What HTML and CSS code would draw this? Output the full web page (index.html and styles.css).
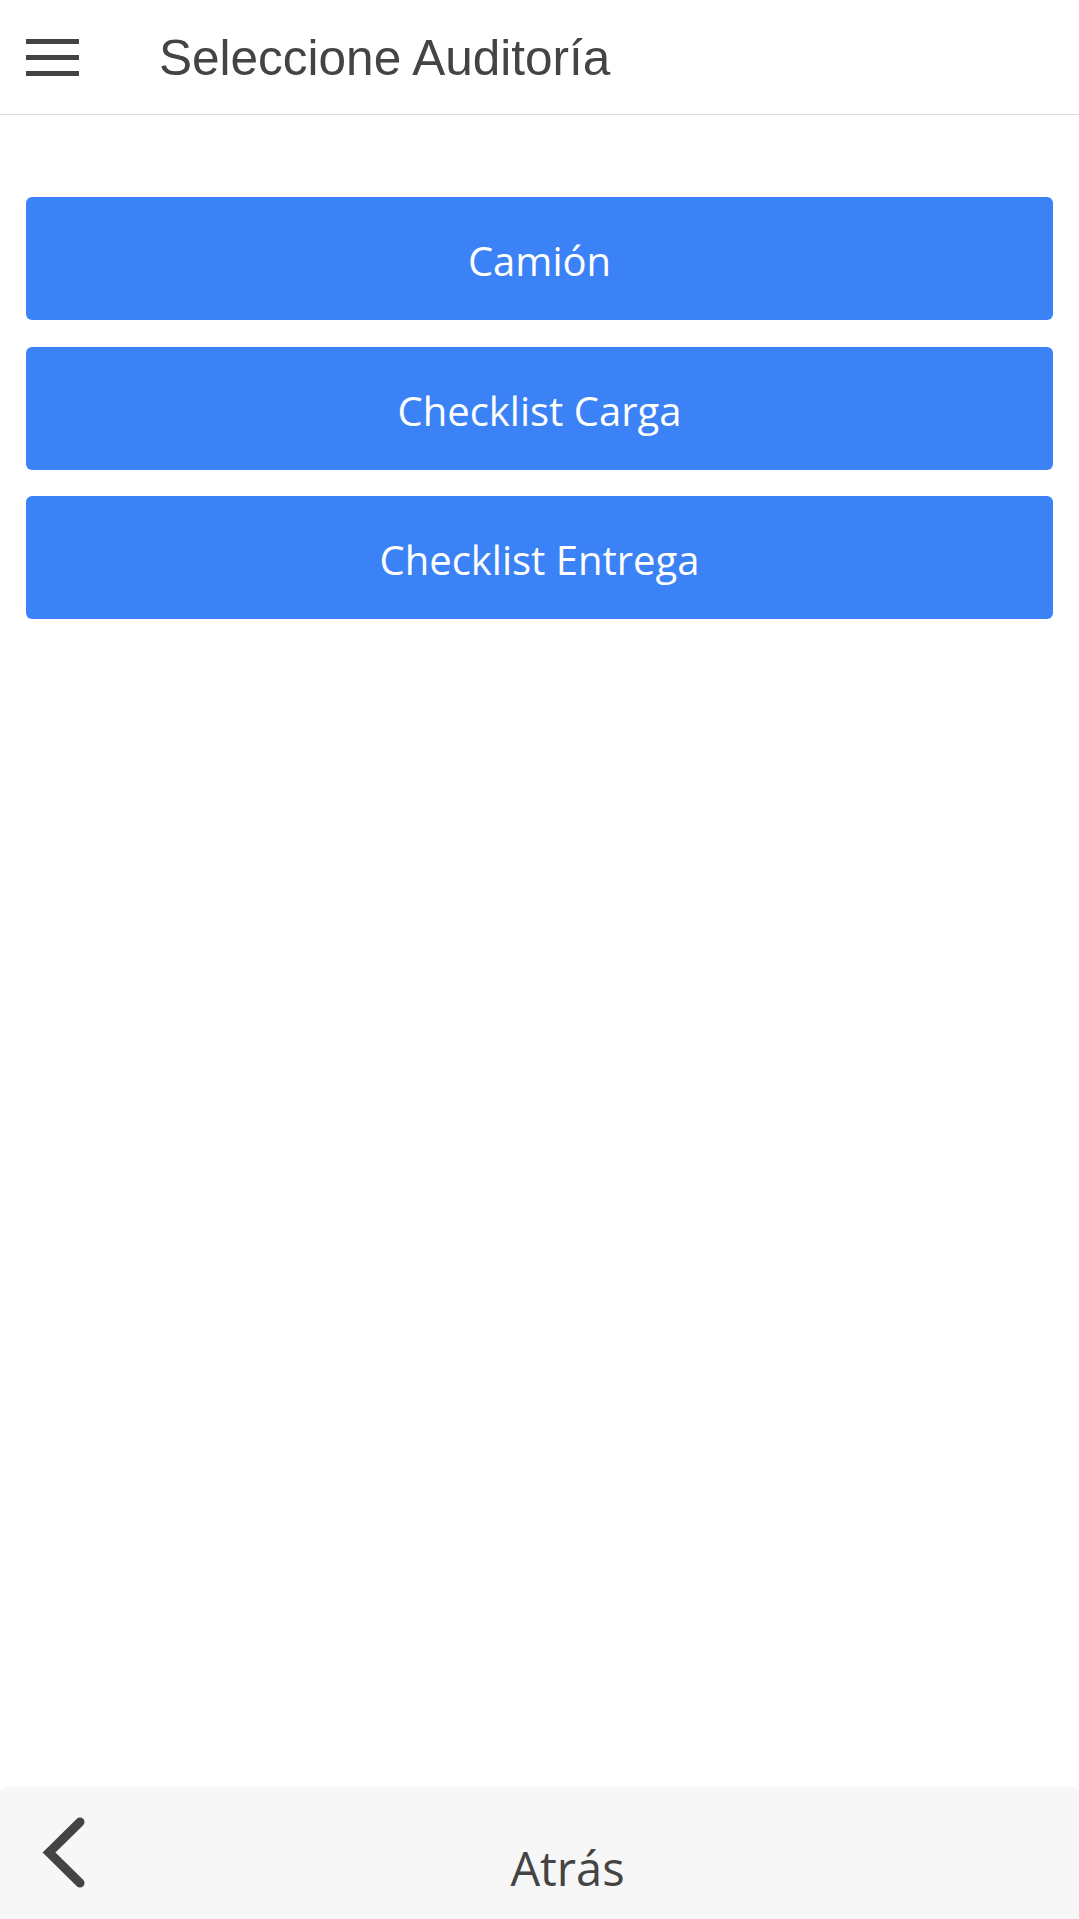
FILE: index.html
```html
<!DOCTYPE html>
<html lang="es">
<head>
<meta charset="utf-8">
<title>Seleccione Auditoría</title>
<link rel="stylesheet" href="styles.css">
</head>
<body>
<div class="app">
  <header class="topbar">
    <div class="hamburger" aria-label="Menú">
      <span class="bar"></span>
      <span class="bar"></span>
      <span class="bar"></span>
    </div>
    <h1 class="title">Seleccione Auditoría</h1>
  </header>
  <main class="content">
    <button class="btn">Camión</button>
    <button class="btn">Checklist Carga</button>
    <button class="btn">Checklist Entrega</button>
  </main>
  <footer class="bottombar">
    <div class="back">
      <svg class="chevron" width="90" height="80" viewBox="0 0 90 80" xmlns="http://www.w3.org/2000/svg">
        <path d="M80 9 L49 39.5 L80 70" fill="none" stroke="#444" stroke-width="9" stroke-linecap="round" stroke-linejoin="miter"/>
      </svg>
    </div>
    <div class="back-label">Atrás</div>
  </footer>
</div>
</body>
</html>
```

FILE: styles.css
```css
html, body {
  margin: 0;
  padding: 0;
  background: #ffffff;
}

.app {
  display: flex;
  flex-direction: column;
  min-height: 100vh;
}

.topbar {
  height: 114px;
  display: flex;
  align-items: center;
  padding-left: 26px;
  border-bottom: 1px solid #dcdcdc;
  flex-shrink: 0;
}

.hamburger {
  width: 53px;
  display: flex;
  flex-direction: column;
  gap: 11px;
}

.bar {
  display: block;
  height: 5px;
  background: #444444;
}

.title {
  margin: 0 0 0 80px;
  font-family: "Liberation Sans", Arial, sans-serif;
  font-weight: normal;
  font-size: 49.5px;
  color: #444444;
}

.content {
  flex: 1;
  display: flex;
  flex-direction: column;
  gap: 26.5px;
  padding: 82px 26px 0;
}

.btn {
  height: 123px;
  border: none;
  border-radius: 6px;
  background: #3b82f6;
  color: #ffffff;
  font-family: "Open Sans", "Noto Sans", sans-serif;
  font-size: 40px;
  padding: 4px 0 0;
  display: flex;
  align-items: center;
  justify-content: center;
}

.bottombar {
  height: 132px;
  flex-shrink: 0;
  background: #f7f7f7;
  border-radius: 6px 6px 0 0;
  display: flex;
  align-items: center;
}

.back {
  width: 56px;
  flex-shrink: 0;
}

.chevron {
  display: block;
  flex-shrink: 0;
}

.back-label {
  flex: 1;
  text-align: center;
  padding-top: 30px;
  font-family: "Open Sans", "Noto Sans", sans-serif;
  font-size: 47px;
  color: #444444;
}
```
